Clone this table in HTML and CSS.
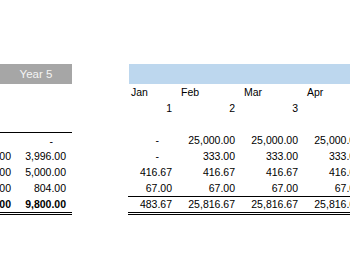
FILE: index.html
```html
<!DOCTYPE html>
<html>
<head>
<meta charset="utf-8">
<link rel="stylesheet" href="styles.css">
</head>
<body>
<div class="sheet">
  <div class="grid">
    <div class="year span2">Year 5</div>
    <div></div>
    <div class="band span5"></div>

    <div></div><div></div><div></div>
    <div class="mon">Jan</div><div class="mon">Feb</div><div class="mon">Mar</div><div class="mon">Apr</div><div></div>

    <div></div><div></div><div></div>
    <div class="num">1</div><div class="num">2</div><div class="num">3</div><div class="num">4</div><div></div>

    <div></div><div></div><div></div><div></div><div></div><div></div><div></div><div></div>

    <div class="num top"></div><div class="num top dash">-</div><div></div>
    <div class="num dash">-</div><div class="num">25,000.00</div><div class="num">25,000.00</div><div class="num">25,000.00</div><div></div>

    <div class="num cut"><span>3,996.00</span></div><div class="num">3,996.00</div><div></div>
    <div class="num dash">-</div><div class="num">333.00</div><div class="num">333.00</div><div class="num">333.00</div><div></div>

    <div class="num cut"><span>5,000.00</span></div><div class="num">5,000.00</div><div></div>
    <div class="num">416.67</div><div class="num">416.67</div><div class="num">416.67</div><div class="num">416.67</div><div></div>

    <div class="num cut"><span>804.00</span></div><div class="num">804.00</div><div></div>
    <div class="num">67.00</div><div class="num">67.00</div><div class="num">67.00</div><div class="num">67.00</div><div></div>

    <div class="num tot bold cut"><span>9,800.00</span></div><div class="num tot bold">9,800.00</div><div></div>
    <div class="num tot line">483.67</div><div class="num tot line">25,816.67</div><div class="num tot line">25,816.67</div><div class="num tot line">25,816.67</div><div class="tot line"></div>
  </div>
</div>
</body>
</html>
```

FILE: styles.css
```css
html, body {
  margin: 0;
  padding: 0;
  background: #ffffff;
}
.sheet {
  width: 350px;
  height: 267px;
  overflow: hidden;
  padding-top: 64px;
  box-sizing: border-box;
  font-family: "Liberation Sans", Arial, sans-serif;
  font-size: 10.5px;
  color: #000;
}
.grid {
  display: grid;
  grid-template-columns: 17px 55px 56px 50px 63px 63px 63px 63px;
  grid-template-rows: 20px 16px 16px 16px 16px 16px 16px 16px 19px;
  width: 446px;
}
.grid > div {
  box-sizing: border-box;
  white-space: nowrap;
  overflow: hidden;
  line-height: 16px;
}
.span2 { grid-column: span 2; }
.span5 { grid-column: span 5; }
.year {
  background: #a6a6a6;
  color: #f4f4f4;
  text-align: center;
  font-size: 11.5px;
  line-height: 20px !important;
}
.band {
  background: #bdd7ee;
  margin-left: 1px;
}
.mon {
  padding-left: 3px;
}
.num {
  text-align: right;
  padding-right: 6px;
}
.cut {
  display: flex;
  justify-content: flex-end;
}
.cut > span {
  flex: none;
}
.dash {
  padding-right: 19px;
}
.top {
  border-top: 1px solid #000;
}
.tot {
  border-bottom: 3px double #000;
  line-height: 15px !important;
}
.line {
  border-top: 1px solid #000;
}
.bold {
  font-weight: bold;
  padding-top: 1px;
}
```
